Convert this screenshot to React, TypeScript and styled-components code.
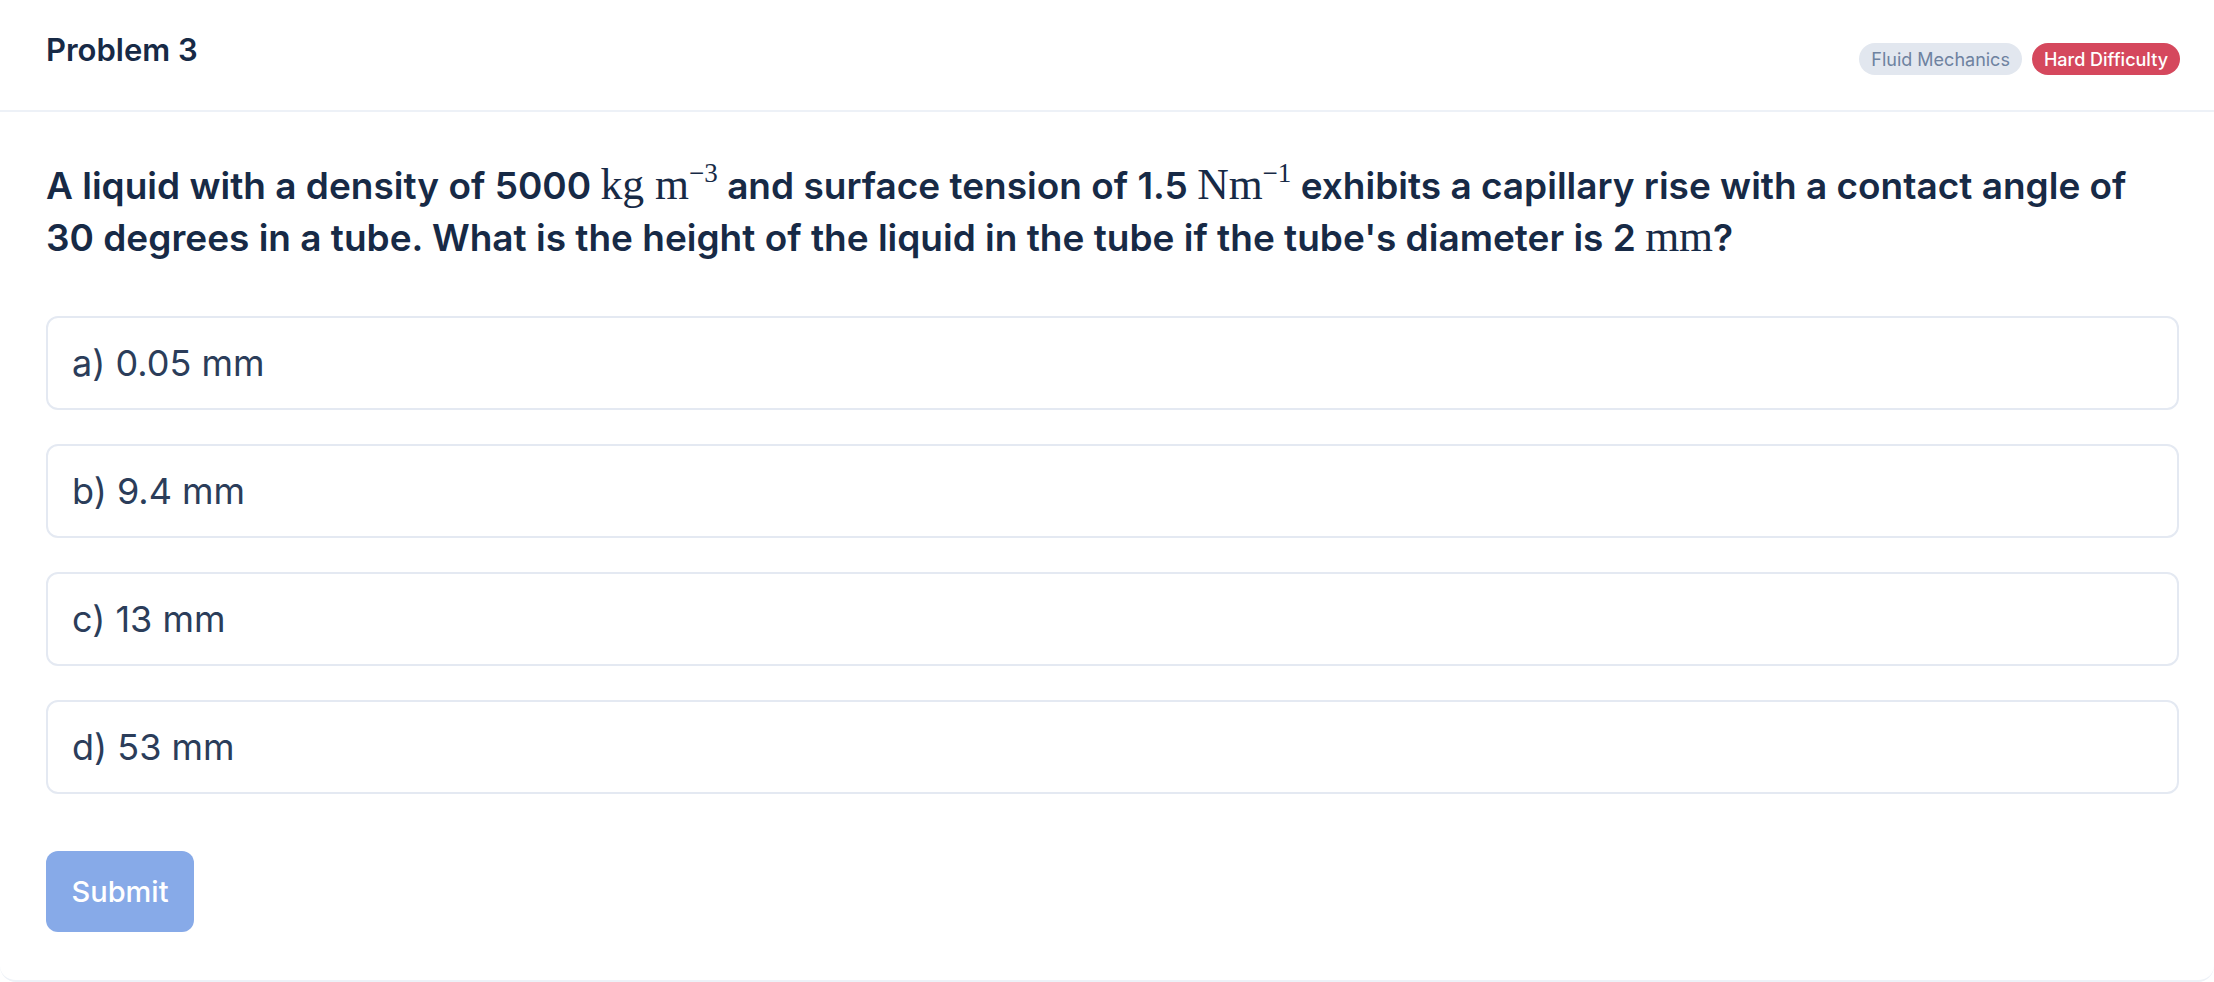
import styled, { createGlobalStyle } from "styled-components";

const GlobalStyle = createGlobalStyle`
  body {
    margin: 0;
    background: #ffffff;
    font-family: Inter, "Noto Sans", "Liberation Sans", sans-serif;
  }
`;

const options = ["a) 0.05 mm", "b) 9.4 mm", "c) 13 mm", "d) 53 mm"];

const App = () => {
  return (
    <>
      <GlobalStyle />
      <Card>
        <Header>
          <Title>Problem 3</Title>
          <Badges>
            <Badge tone="gray">Fluid Mechanics</Badge>
            <Badge tone="red">Hard Difficulty</Badge>
          </Badges>
        </Header>

        <Body>
          <Question>
            A liquid with a density of 5000{" "}
            <Math>
              kg m<Sup>−3</Sup>
            </Math>{" "}
            and surface tension of 1.5{" "}
            <Math>
              Nm<Sup>−1</Sup>
            </Math>{" "}
            exhibits a capillary rise with a contact angle of 30 degrees in a
            tube. What is the height of the liquid in the tube if the tube's
            diameter is 2 <Math>mm</Math>?
          </Question>

          <Options>
            {options.map((o) => (
              <Option key={o}>{o}</Option>
            ))}
          </Options>

          <Button>Submit</Button>
        </Body>
      </Card>
    </>
  );
};

export default App;

const Card = styled.div`
  width: 100%;
  min-height: 982px;
  box-sizing: border-box;
  border-bottom: 2px solid #edf1f7;
  border-radius: 0 0 16px 16px;
  background: #fff;
`;

const Header = styled.div`
  height: 112px;
  box-sizing: border-box;
  padding: 28px 34px 0 46px;
  display: flex;
  justify-content: space-between;
  align-items: flex-start;
  border-bottom: 2px solid #edf1f7;
`;

const Title = styled.div`
  font-size: 31px;
  line-height: 44px;
  font-weight: 600;
  color: #172a46;
`;

const Badges = styled.div`
  display: flex;
  gap: 10px;
  margin-top: 15px;
`;

const Badge = styled.span<{ tone: "gray" | "red" }>`
  height: 32px;
  display: inline-flex;
  align-items: center;
  padding: 0 12px;
  border-radius: 16px;
  font-size: 18px;
  font-weight: ${(p) => (p.tone === "red" ? 500 : 400)};
  background: ${(p) => (p.tone === "red" ? "#d5485d" : "#e2e7ef")};
  color: ${(p) => (p.tone === "red" ? "#ffffff" : "#6e82a0")};
`;

const Body = styled.div`
  padding: 48px 35px 48px 46px;
`;

const Question = styled.div`
  font-size: 37px;
  line-height: 52px;
  font-weight: 600;
  color: #172a46;
`;

const Math = styled.span`
  font-family: "Liberation Serif", "DejaVu Serif", serif;
  font-weight: 400;
  font-size: 1.18em;
  line-height: 1;
`;

const Sup = styled.span`
  display: inline-block;
  font-size: 0.62em;
  line-height: 1;
  transform: translateY(-0.62em);
`;

const Options = styled.div`
  margin-top: 52px;
  display: flex;
  flex-direction: column;
  gap: 34px;
`;

const Option = styled.div`
  height: 94px;
  box-sizing: border-box;
  border: 2px solid #e4e9f2;
  border-radius: 12px;
  padding: 0 24px;
  display: flex;
  align-items: center;
  font-size: 36px;
  color: #2b3d5a;
`;

const Button = styled.button`
  margin-top: 57px;
  width: 148px;
  height: 81px;
  border: none;
  border-radius: 12px;
  background: #87aae8;
  color: #ffffff;
  font-family: inherit;
  font-size: 29px;
  font-weight: 500;
`;
